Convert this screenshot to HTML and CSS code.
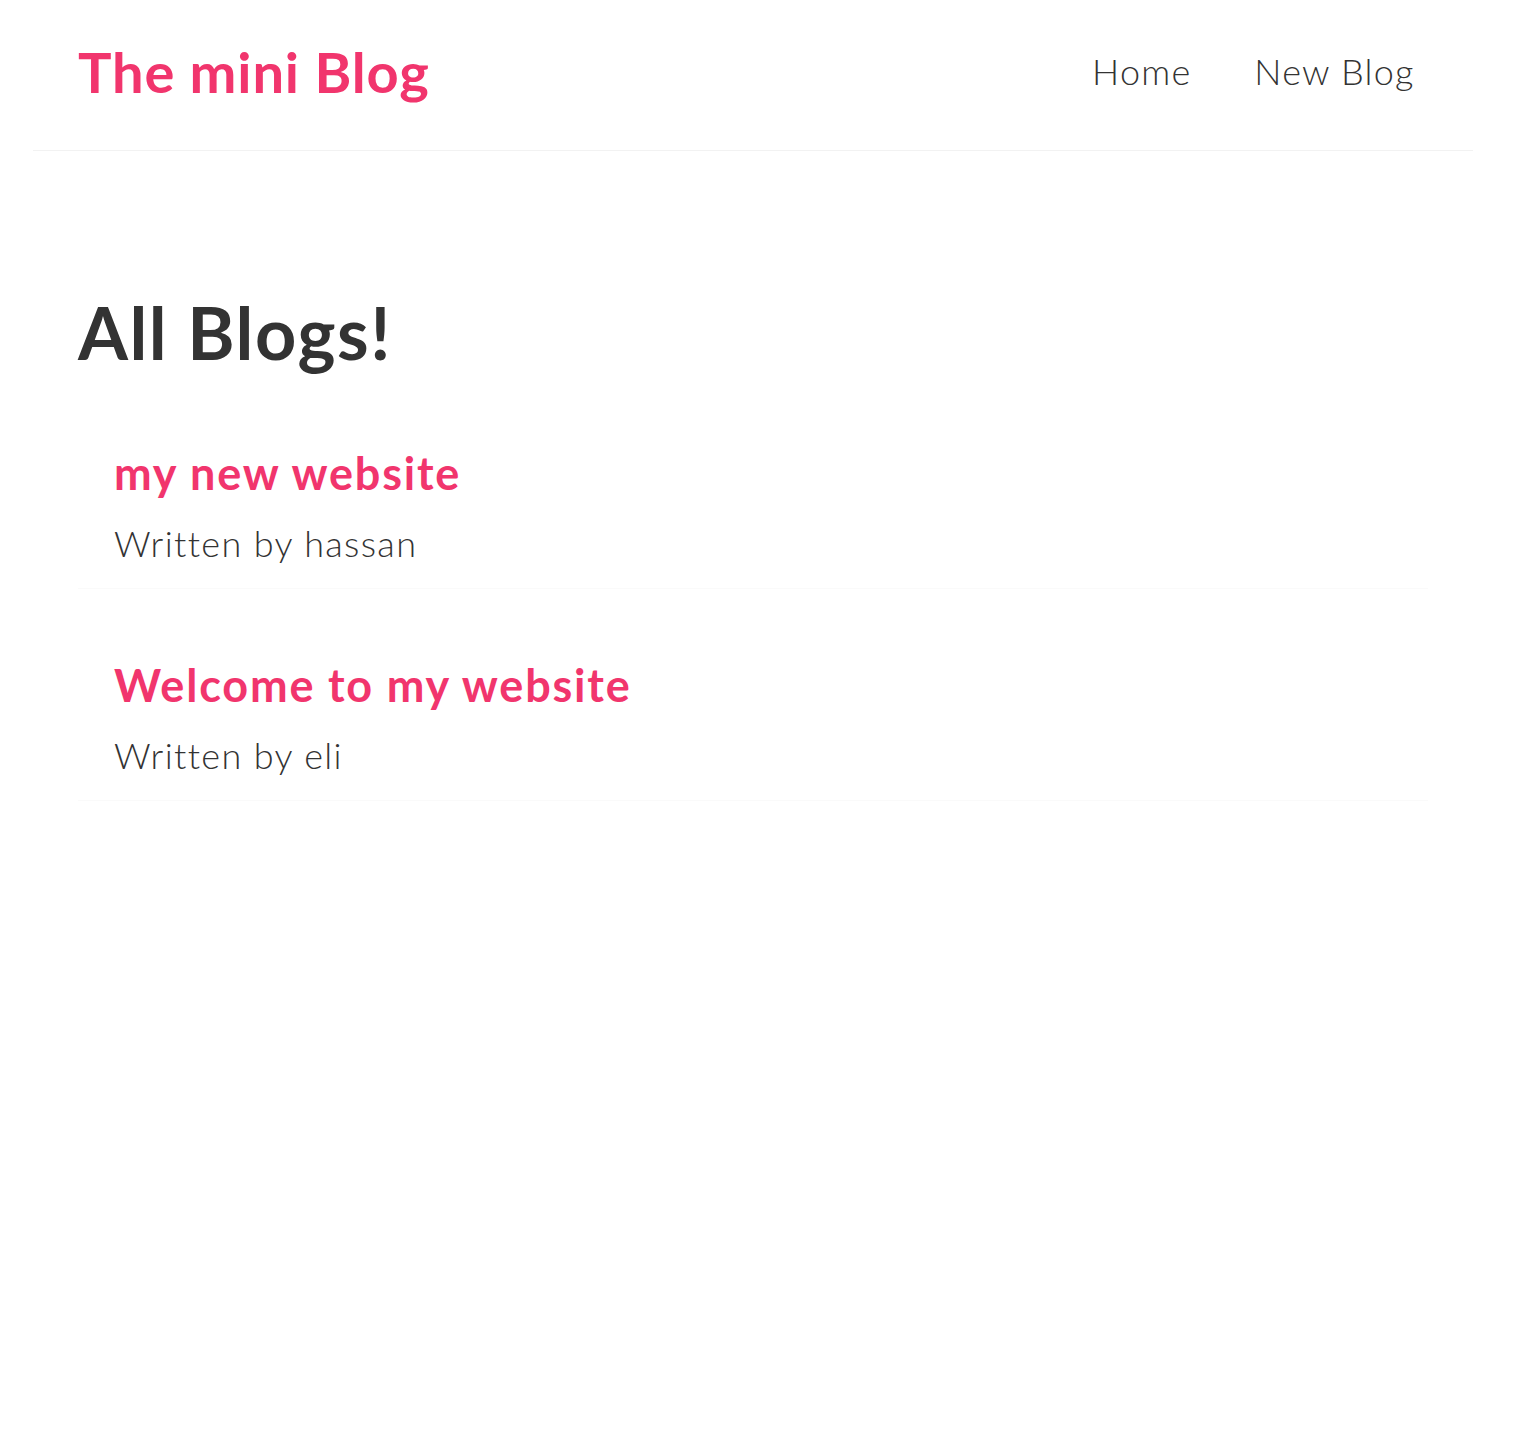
FILE: index.html
```html
<!DOCTYPE html>
<html lang="en">
<head>
<meta charset="utf-8">
<title>The mini Blog</title>
<link rel="stylesheet" href="styles.css">
</head>
<body>
<div class="app">
  <nav class="navbar">
    <h1 class="brand">The mini Blog</h1>
    <div class="links">
      <a href="#">Home</a>
      <a href="#">New Blog</a>
    </div>
  </nav>
  <main class="content">
    <h1 class="page-title">All Blogs!</h1>
    <div class="blog-preview">
      <h2>my new website</h2>
      <p>Written by hassan</p>
    </div>
    <div class="blog-preview">
      <h2>Welcome to my website</h2>
      <p>Written by eli</p>
    </div>
  </main>
</div>
</body>
</html>
```
FILE: styles.css
```css
* {
  margin: 0;
  font-family: "Lato", "Open Sans", sans-serif;
  color: #333;
}
body {
  margin: 0;
  background: #fff;
}
.app {
  width: 1506px;
}
.navbar {
  max-width: 1350px;
  margin: 0 auto;
  padding: 0 45px;
  height: 150px;
  display: flex;
  align-items: center;
  border-bottom: 1px solid #f2f2f2;
}
.brand {
  color: #f1356d;
  font-size: 56px;
  font-weight: 700;
  line-height: 70px;
  letter-spacing: 0.85px;
  margin-top: -6px;
}
.links {
  margin-left: auto;
  margin-top: -8px;
  display: flex;
}
.links a {
  margin-left: 36px;
  padding: 13.5px;
  text-decoration: none;
  font-size: 36px;
  font-weight: 300;
  line-height: 45px;
  letter-spacing: 1.2px;
}
.content {
  max-width: 1350px;
  margin: 90px auto;
  padding: 46px 45px 45px;
}
.page-title {
  font-size: 72px;
  font-weight: 700;
  line-height: 90px;
  letter-spacing: 1.5px;
}
.blog-preview {
  padding: 22.5px 36px;
  margin: 45px 0;
  border-bottom: 1px solid #fafafa;
}
.blog-preview h2 {
  font-size: 45px;
  font-weight: 700;
  color: #f1356d;
  line-height: 57px;
  letter-spacing: 1.8px;
  margin-bottom: 18px;
}
.blog-preview p {
  font-size: 36px;
  font-weight: 300;
  line-height: 46px;
  letter-spacing: 1.35px;
}
```
